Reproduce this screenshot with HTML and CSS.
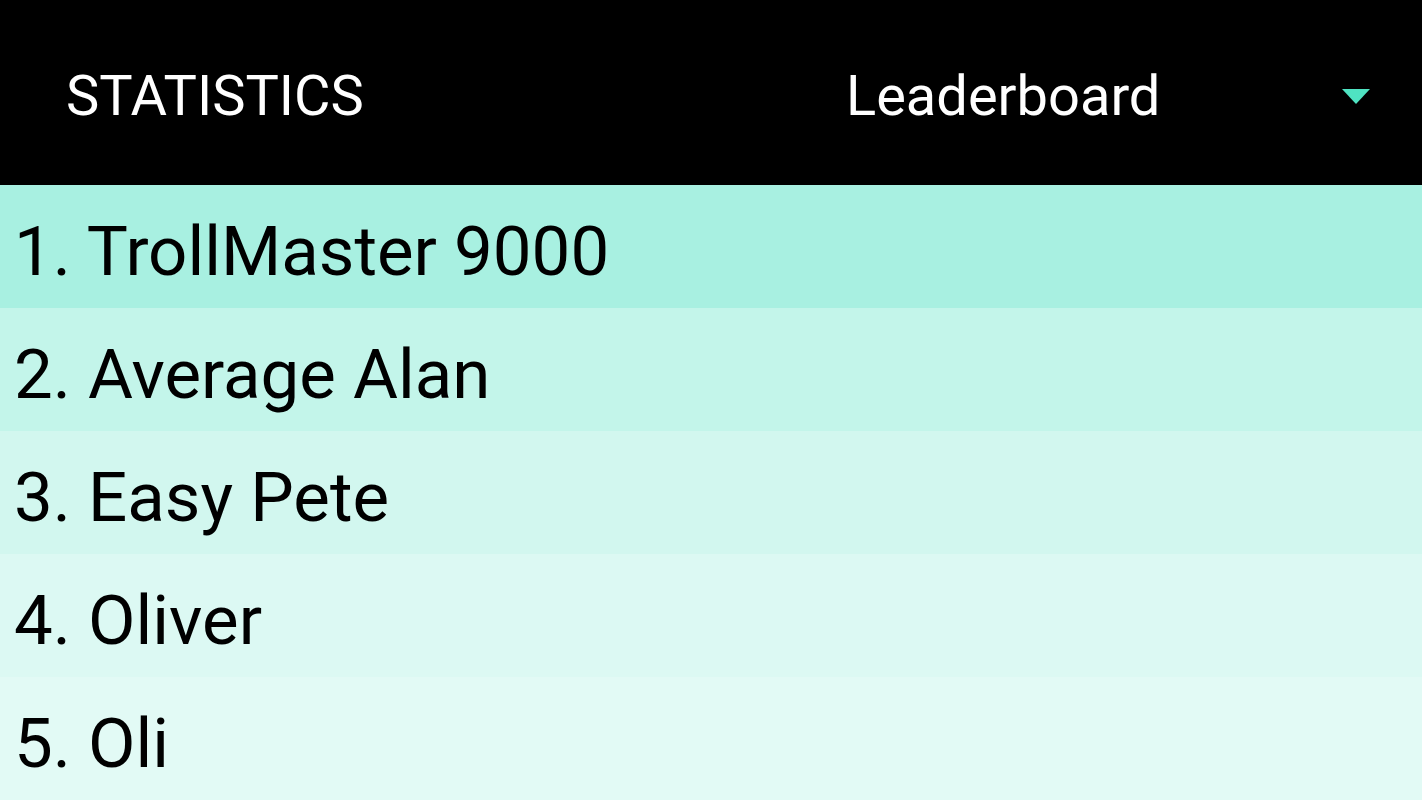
FILE: index.html
```html
<!DOCTYPE html>
<html>
<head>
<meta charset="utf-8">
<link rel="stylesheet" href="styles.css">
</head>
<body>
<div class="app">
  <header class="toolbar">
    <div class="title">STATISTICS</div>
    <div class="spinner">
      <span class="spinner-label">Leaderboard</span>
      <svg class="spinner-arrow" width="28" height="15" viewBox="0 0 28 15"><polygon points="0,0 28,0 14,15" fill="#4fe3c2"/></svg>
    </div>
  </header>
  <ul class="board">
    <li class="row r1">1. TrollMaster 9000</li>
    <li class="row r2">2. Average Alan</li>
    <li class="row r3">3. Easy Pete</li>
    <li class="row r4">4. Oliver</li>
    <li class="row r5">5. Oli</li>
  </ul>
</div>
</body>
</html>
```

FILE: styles.css
```css
html, body {
  margin: 0;
  padding: 0;
  width: 1422px;
  height: 800px;
  overflow: hidden;
  font-family: Roboto, "Noto Sans", sans-serif;
}
.app {
  display: flex;
  flex-direction: column;
  height: 800px;
}
.toolbar {
  height: 185px;
  background: #000;
  color: #fff;
  display: flex;
  align-items: center;
  flex-shrink: 0;
}
.title {
  font-size: 56px;
  padding-left: 66px;
  padding-top: 6px;
}
.spinner {
  margin-left: auto;
  width: 576px;
  display: flex;
  align-items: center;
  justify-content: space-between;
  padding-right: 52px;
  box-sizing: border-box;
  padding-top: 6px;
}
.spinner-label {
  font-size: 56px;
}
.spinner-arrow {
  display: block;
  margin-top: 2px;
}
.board {
  list-style: none;
  margin: 0;
  padding: 0;
  flex: 1;
  display: flex;
  flex-direction: column;
}
.row {
  height: 123px;
  display: flex;
  align-items: center;
  padding-left: 14px;
  padding-top: 10px;
  font-size: 69px;
  color: #000;
  box-sizing: border-box;
}
.r1 { background: #a8f0e1; }
.r2 { background: #c3f5ea; }
.r3 { background: #d2f7ef; }
.r4 { background: #dcf9f3; }
.r5 { background: #e2faf5; }
```
